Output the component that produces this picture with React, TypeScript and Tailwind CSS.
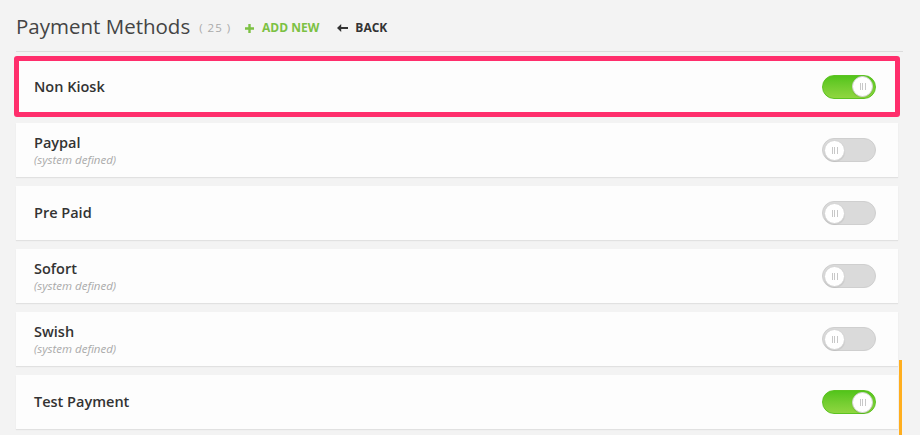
import React from "react";

type Method = { name: string; system?: boolean; on?: boolean; highlight?: boolean };

const methods: Method[] = [
  { name: "Non Kiosk", on: true, highlight: true },
  { name: "Paypal", system: true },
  { name: "Pre Paid" },
  { name: "Sofort", system: true },
  { name: "Swish", system: true },
  { name: "Test Payment", on: true },
];

function Toggle({ on }: { on?: boolean }) {
  return (
    <div
      className={
        on
          ? "flex h-[24px] w-[54px] items-center justify-end rounded-full border border-[#5cc322] bg-gradient-to-b from-[#52c41a] to-[#8fd640] px-[2px]"
          : "flex h-[24px] w-[54px] items-center justify-start rounded-full border border-[#cfcfcf] bg-[#dadada] px-[1px]"
      }
    >
      <div className="flex h-[21px] w-[21px] items-center justify-center rounded-full border border-[#d4d4d4] bg-white shadow-[0_1px_1px_rgba(0,0,0,0.08)]">
        <div className="flex gap-[1.5px]">
          <span className="h-[7px] w-px bg-[#c8c8c8]" />
          <span className="h-[7px] w-px bg-[#c8c8c8]" />
          <span className="h-[7px] w-px bg-[#c8c8c8]" />
        </div>
      </div>
    </div>
  );
}

function Row({ m }: { m: Method }) {
  const label = (
    <div className="flex flex-col">
      <span className="text-[14.5px] font-semibold leading-[18px] text-[#333]">{m.name}</span>
      {m.system && (
        <span className="text-[11.5px] italic leading-[15px] text-[#aaa]">(system defined)</span>
      )}
    </div>
  );
  if (m.highlight) {
    return (
      <div className="-mx-[2px] -mb-[3px] flex h-[61px] items-center justify-between rounded-[3px] border-[5px] border-[#ff2e6c] bg-[#fdfdfd] pl-[15px] pr-[19px]">
        {label}
        <Toggle on={m.on} />
      </div>
    );
  }
  return (
    <div className="flex h-[54px] items-center justify-between bg-[#fdfdfd] pl-[18px] pr-[22px] shadow-[0_1px_1px_rgba(0,0,0,0.07)]">
      {label}
      <Toggle on={m.on} />
    </div>
  );
}

export default function App() {
  return (
    <div
      className="relative h-[435px] w-[920px] overflow-hidden bg-[#f3f3f3]"
      style={{ fontFamily: '"Open Sans", "Noto Sans", sans-serif' }}
    >
      <div className="ml-4 mr-[17px] flex h-[52px] items-center border-b border-[#dcdcdc] pt-[2px]">
        <h1 className="text-[20.5px] font-normal leading-none text-[#444]">Payment Methods</h1>
        <span className="ml-[9px] mt-[2px] text-[11.5px] tracking-[1px] text-[#aaa]">( 25 )</span>
        <button className="ml-[14px] mt-[3px] flex items-center gap-[8px] text-[12px] font-bold text-[#7cc143]">
          <svg width="9" height="9" viewBox="0 0 9 9">
            <path d="M3.3 0h2.4v3.3H9v2.4H5.7V9H3.3V5.7H0V3.3h3.3z" fill="#7cc143" />
          </svg>
          ADD NEW
        </button>
        <button className="ml-[18px] mt-[3px] flex items-center gap-[7px] text-[12px] font-bold text-[#333]">
          <svg width="11" height="8" viewBox="0 0 11 8">
            <path d="M0 4L4.2 0v2.9H11v2.2H4.2V8z" fill="#333" />
          </svg>
          BACK
        </button>
      </div>

      <div className="ml-4 mr-[22px] mt-[4px] flex flex-col gap-[9px]">
        {methods.map((m) => (
          <Row key={m.name} m={m} />
        ))}
      </div>

      <div className="absolute right-[18px] top-[360px] h-[75px] w-[3px] bg-[#ffae1e]" />
    </div>
  );
}
